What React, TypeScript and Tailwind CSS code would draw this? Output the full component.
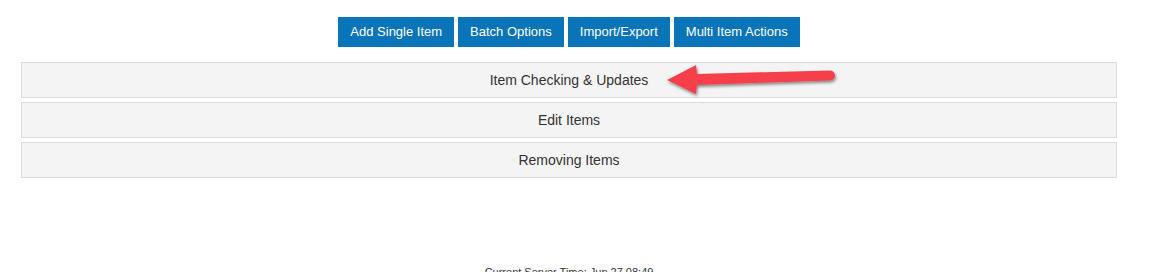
const buttons = ["Add Single Item", "Batch Options", "Import/Export", "Multi Item Actions"];
const sections = ["Item Checking & Updates", "Edit Items", "Removing Items"];

function Arrow() {
  return (
    <svg
      className="pointer-events-none absolute left-[660px] top-[58px]"
      width="190"
      height="45"
      viewBox="0 0 190 45"
    >
      <defs>
        <filter id="sh" x="-10%" y="-30%" width="120%" height="170%">
          <feDropShadow dx="1" dy="2" stdDeviation="1.5" floodColor="#000" floodOpacity="0.45" />
        </filter>
      </defs>
      <g filter="url(#sh)">
        <path
          d="M7 22 L36 7 L37 16 L170 12.5 A5 5 0 0 1 170 22.5 L37 27 L36 36 Z"
          fill="#f5414b"
        />
      </g>
    </svg>
  );
}

export default function App() {
  return (
    <div
      className="relative h-[272px] overflow-hidden bg-white pr-[17px]"
      style={{ fontFamily: '"Liberation Sans", Arial, sans-serif' }}
    >
      <div className="px-[21px] pt-[17px]">
        <div className="flex justify-center gap-1">
          {buttons.map((b) => (
            <button
              key={b}
              className="h-[30px] bg-[#0a74b8] px-3 text-[13px] text-white"
            >
              {b}
            </button>
          ))}
        </div>

        <div className="mt-[15px] flex flex-col gap-1">
          {sections.map((s) => (
            <div
              key={s}
              className="flex h-9 items-center justify-center border border-[#dcdcdc] bg-[#f4f4f4] text-sm text-[#333]"
            >
              {s}
            </div>
          ))}
        </div>

        <p className="mt-[86px] text-center text-[11px] text-[#333]">
          Current Server Time: Jun 27 08:49
        </p>
      </div>
      <Arrow />
    </div>
  );
}
